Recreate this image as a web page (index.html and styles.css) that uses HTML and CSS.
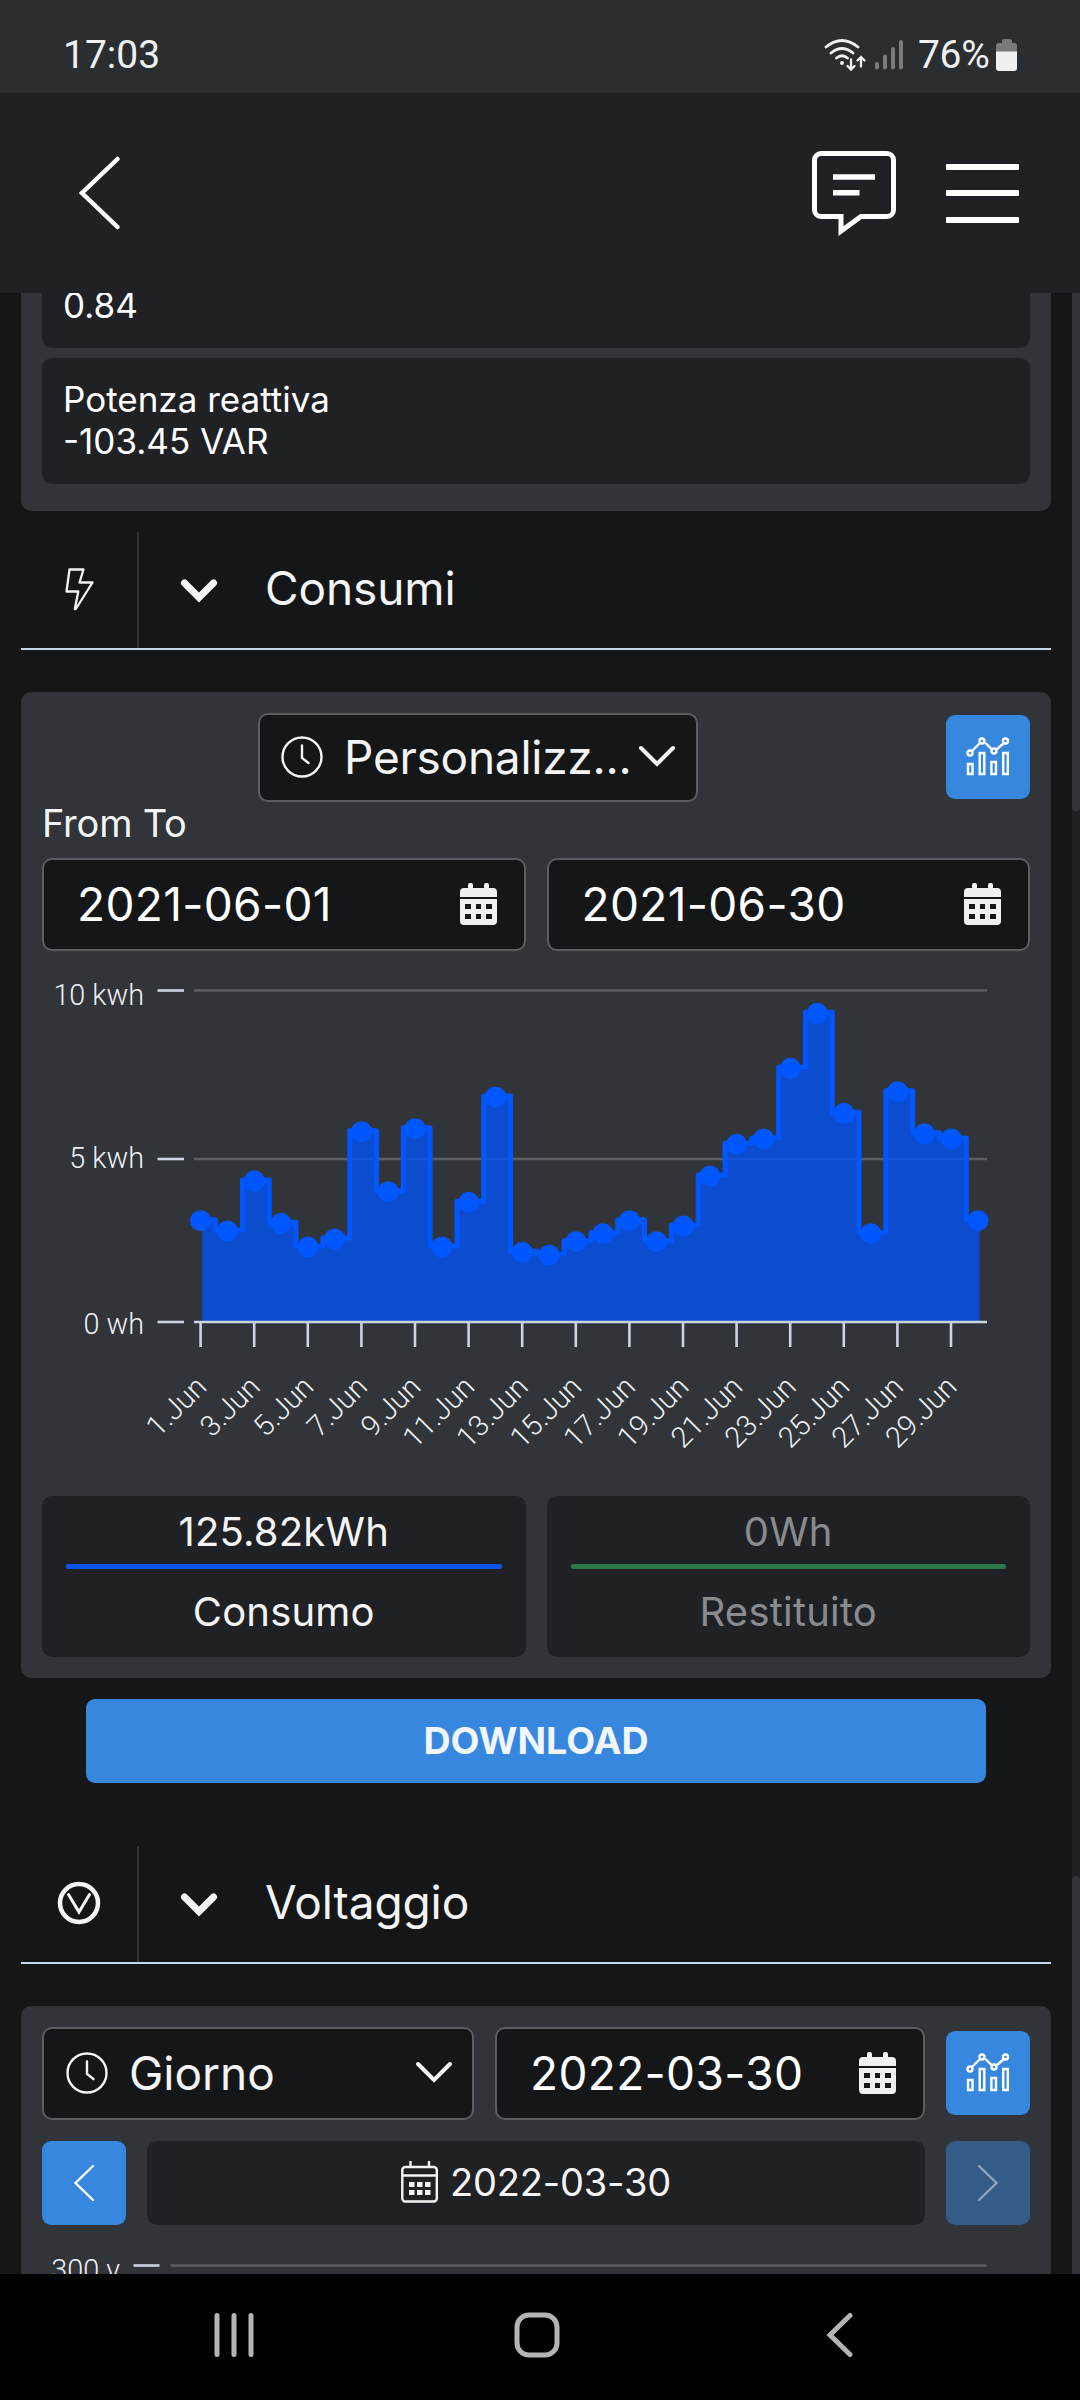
FILE: index.html
```html
<!DOCTYPE html>
<html lang="it">
<head>
  <meta charset="UTF-8" />
  <meta name="viewport" content="width=device-width, initial-scale=1.0" />
  <title>Consumi</title>
  <link rel="stylesheet" href="styles.css">
</head>
<body>

  <svg class="sprite" width="0" height="0">
    <symbol id="calendar" viewBox="0 0 38 42">
      <path fill-rule="evenodd" d="M0 14V9a4 4 0 0 1 4-4h4V2a2 2 0 0 1 2-2h1a2 2 0 0 1 2 2v3h11V2a2 2 0 0 1 2-2h1a2 2 0 0 1 2 2v3h4a4 4 0 0 1 4 4v5zM0 16h37v22a4 4 0 0 1-4 4H4a4 4 0 0 1-4-4zM5 21v5h6v-5zM16 21v5h5v-5zM26 21v5h6v-5zM5 31v5h6v-5zM16 31v5h5v-5zM26 31v5h6v-5z"/>
    </symbol>
    <symbol id="clock" viewBox="0 0 42 42">
      <circle cx="21" cy="21" r="19.5"/>
      <path d="M21 9.500v12.500l6.500 5"/>
    </symbol>
    <symbol id="stats" viewBox="0 0 44 40">
      <path d="M6 14l8-8M19.500 6l6 6M31 12l7-6"/>
      <circle cx="4" cy="16" r="2.500"/><circle cx="16" cy="4" r="2.500"/><circle cx="28" cy="14" r="2.500"/><circle cx="39.500" cy="4" r="2.500"/>
      <path d="M2 27h4.500v10H2zM13.700 16h4.600v21h-4.600zM25.400 25h4.600v12h-4.600zM37.200 16h4.600v21h-4.600z"/>
    </symbol>
    <symbol id="chevron" viewBox="0 0 38 24">
      <path d="M3 3l16 16L35 3"/>
    </symbol>
    <symbol id="chevron-bold" viewBox="0 0 38 24">
      <path d="M4.500 4L19 18.500 33.500 4"/>
    </symbol>
  </svg>

  <div class="status">
    <span class="time">17:03</span>
    <svg class="signal" width="82" height="36" viewBox="824 36 82 36" fill="none" stroke="#f0f0f0" stroke-width="2.800" stroke-linecap="round">
      <path d="M826 46q16-13 32 0M831 52q11-9 22 0M836.500 57q5.500-4.500 11 0"/>
      <circle cx="842" cy="62" r="2" fill="#f0f0f0" stroke="none"/>
      <path d="M851 58.500v9.500M847.500 65l3.500 3.500 3.500-3.500M861 65.500v-9.500M857.500 59.500l3.500-3.500 3.500 3.500" stroke-width="2.300"/>
      <path d="M877 63v3.500M885 55.500v11M893 48v18.500M901 41v25.500" stroke="#797c7e" stroke-width="4"/>
    </svg>
    <span class="percent">76%</span>
    <svg class="battery" width="22" height="34" viewBox="0 0 22 34">
      <path d="M6 5V3a2 2 0 0 1 2-2h6a2 2 0 0 1 2 2v2h2a3 3 0 0 1 3 3v6H0V8a3 3 0 0 1 3-3z" fill="#77797b"/>
      <path d="M0 13.500h21V30a3 3 0 0 1-3 3H3a3 3 0 0 1-3-3z" fill="#f0f0f0"/>
    </svg>
  </div>

  <header class="topbar">
    <svg class="back" width="44" height="76" viewBox="0 0 44 76" fill="none" stroke="#fff" stroke-width="4.500" stroke-linecap="round">
      <path d="M39.500 4L4 38l35.500 34"/>
    </svg>
    <svg class="chat" width="84" height="86" viewBox="0 0 84 86" fill="none" stroke="#fff" stroke-width="5">
      <path d="M9 3.500h66a6.500 6.500 0 0 1 6.500 6.500v50a6.500 6.500 0 0 1-6.500 6.500H49L29 81V66.500H9A6.500 6.500 0 0 1 2.500 60V10A6.500 6.500 0 0 1 9 3.500z"/>
      <path d="M21 27h42M21 42.800h26.500" stroke-width="5.500"/>
    </svg>
    <button class="menu-btn"><span></span><span></span><span></span></button>
  </header>

  <main class="content">
    <section class="card card-values">
      <div class="value value-cut">0.84</div>
      <div class="value">Potenza reattiva<br>-103.45 VAR</div>
    </section>

    <div class="section-head">
      <div class="section-icon">
        <svg width="30" height="46" viewBox="0 0 30 46" fill="none" stroke="#f4f4f4" stroke-width="2.300" stroke-linejoin="round">
          <path d="M5.500 3.500h14L15.500 16.500h13L11.800 43h-1l3.500-17.500H2.500z"/>
        </svg>
      </div>
      <svg class="toggle" width="38" height="24"><use href="#chevron-bold"/></svg>
      <h2>Consumi</h2>
    </div>

    <section class="card card-usage">
      <div class="toolbar">
        <div class="select select-period">
          <svg class="clock" width="42" height="42"><use href="#clock"/></svg>
          <span>Personalizz...</span>
          <svg class="arrow" width="38" height="24"><use href="#chevron"/></svg>
        </div>
        <button class="btn btn-stats"><svg width="44" height="40"><use href="#stats"/></svg></button>
      </div>
      <div class="range-label">From To</div>
      <div class="dates">
        <div class="date">2021-06-01<svg width="38" height="42"><use href="#calendar"/></svg></div>
        <div class="date">2021-06-30<svg width="38" height="42"><use href="#calendar"/></svg></div>
      </div>
      <svg id="chart" class="chart" width="988" height="539" viewBox="42 957 988 539"></svg>
      <div class="legend">
        <div class="legend-item">125.82kWh<hr>Consumo</div>
        <div class="legend-item returned">0Wh<hr>Restituito</div>
      </div>
    </section>

    <button class="btn download">DOWNLOAD</button>

    <div class="section-head">
      <div class="section-icon">
        <svg width="44" height="44" viewBox="0 0 44 44" fill="none" stroke="#f4f4f4" stroke-linecap="round">
          <circle cx="22" cy="22" r="19" stroke-width="4.500"/>
          <path d="M11.500 13.500L22 31l10.500-17.500" stroke-width="3"/>
        </svg>
      </div>
      <svg class="toggle" width="38" height="24"><use href="#chevron-bold"/></svg>
      <h2>Voltaggio</h2>
    </div>

    <section class="card card-voltage">
      <div class="toolbar">
        <div class="select select-day">
          <svg class="clock" width="42" height="42"><use href="#clock"/></svg>
          <span>Giorno</span>
          <svg class="arrow" width="38" height="24"><use href="#chevron"/></svg>
        </div>
        <div class="date">2022-03-30<svg width="38" height="42"><use href="#calendar"/></svg></div>
        <button class="btn btn-stats"><svg width="44" height="40"><use href="#stats"/></svg></button>
      </div>
      <div class="pager">
        <button class="btn"><svg width="22" height="40" viewBox="0 0 22 40"><path d="M20 3L2.500 20 20 37"/></svg></button>
        <div class="current-day">
          <svg width="38" height="42" viewBox="0 0 38 42" fill="none" stroke="#f4f4f4" stroke-width="2.400">
            <rect x="1.300" y="6" width="34.500" height="34.500" rx="3"/>
            <path d="M9.500 0v6M28 0v6M1 14.500h35"/>
            <path d="M8 23.500h21.500M8 31.500h21.500" stroke-width="5" stroke-dasharray="5.500 2.500"/>
          </svg>
          <span>2022-03-30</span>
        </div>
        <button class="btn" disabled><svg width="22" height="40" viewBox="0 0 22 40"><path d="M2 3l17.500 17L2 37"/></svg></button>
      </div>
      <svg class="chart" width="988" height="60" viewBox="42 2250 988 60">
        <text x="120" y="2280" text-anchor="end">300 v</text>
        <path d="M133.500 2265.500h26" class="axis"/>
        <path d="M170.500 2265.500h816" class="grid"/>
      </svg>
    </section>

    <div class="scrollbar"><i></i><i></i></div>
  </main>

  <nav class="navbar">
    <svg width="40" height="46" viewBox="0 0 40 46"><path d="M3 3.500v39M20 3.500v39M37 3.500v39"/></svg>
    <svg width="48" height="48" viewBox="0 0 48 48"><rect x="4" y="4" width="40" height="40" rx="12"/></svg>
    <svg width="28" height="46" viewBox="0 0 28 46"><path d="M24 3.500L4 23l20 19.500"/></svg>
  </nav>

  <script src="script.js"></script>
</body>
</html>
```
FILE: styles.css
```css
:root {
  --bg: #151618;
  --panel: #202124;
  --card: #313438;
  --blue: #3887df;
  --text: #f4f4f4;
}

* {
  box-sizing: border-box;
}

body {
  margin: 0;
  height: 2400px;
  display: flex;
  flex-direction: column;
  overflow: hidden;
  background: var(--bg);
  color: var(--text);
  font-family: Inter, "Liberation Sans", sans-serif;
}

svg {
  display: block;
  flex: none;
}

.sprite {
  position: absolute;
}

button {
  border: none;
  padding: 0;
  font-family: inherit;
}

/* status bar */
.status {
  height: 93px;
  flex: none;
  display: flex;
  align-items: center;
  padding: 17px 62px 0 63px;
  background: #2a2e30;
  font-family: Roboto, sans-serif;
  font-size: 39px;
  color: #f0f0f0;
}

.time {
  flex: 1;
}

.signal {
  margin-right: 12px;
}

.percent {
  width: 75px;
  margin-right: 3px;
  white-space: nowrap;
  letter-spacing: -0.3px;
}

/* header */
.topbar {
  height: 200px;
  flex: none;
  display: flex;
  align-items: center;
  padding: 0 61px 0 78px;
  background: var(--panel);
}

.chat {
  margin-left: auto;
  margin-right: 50px;
}

.menu-btn {
  width: 73px;
  display: flex;
  flex-direction: column;
  gap: 20.5px;
  background: none;
}

.menu-btn span {
  height: 6px;
  border-radius: 1px;
  background: #fff;
}

/* content */
.content {
  position: relative;
  height: 1981px;
  flex: none;
  padding: 0 29px 0 21px;
  overflow: hidden;
}

.card {
  padding: 21px;
  border-radius: 10px;
  background: var(--card);
}

.card-values {
  height: 218px;
  padding-top: 0;
  border-radius: 0 0 10px 10px;
}

.value {
  height: 126px;
  padding: 20px 21px;
  border-radius: 10px;
  background: var(--panel);
  color: #fff;
  font-size: 35px;
  line-height: 42px;
}

.value-cut {
  height: 55px;
  margin-bottom: 10px;
  padding-top: 0;
  line-height: 25px;
  border-radius: 0 0 10px 10px;
}

.section-head {
  height: 118px;
  margin-top: 21px;
  display: flex;
  align-items: center;
  border-bottom: 2px solid #c3d7e8;
}

.section-icon {
  width: 118px;
  height: 100%;
  display: flex;
  align-items: center;
  justify-content: center;
  border-right: 2px solid #313438;
}

.section-icon svg {
  margin-top: -3px;
}

.toggle {
  margin: 2px 0 0 41px;
  fill: none;
  stroke: var(--text);
  stroke-width: 7;
  stroke-linecap: round;
}

.section-head h2 {
  margin: -4px 0 0 47px;
  font-size: 46px;
  font-weight: 400;
  letter-spacing: -0.1px;
}

.card-usage {
  height: 986px;
  margin-top: 42px;
}

.toolbar {
  display: flex;
  align-items: center;
  gap: 21px;
}

.card-usage .toolbar {
  height: 89px;
}

.btn-stats {
  margin-top: -2px;
}

.select,
.date {
  flex: 1;
  height: 93px;
  display: flex;
  align-items: center;
  border: 2px solid #5b5d60;
  border-radius: 10px;
  background: var(--bg);
  font-size: 46px;
}

.select {
  padding: 0 19px 1px 22px;
}

.select .clock {
  margin-right: 21px;
}

.select-period {
  flex: none;
  width: 440px;
  height: 89px;
  margin: 0 auto 0 216px;
  padding: 0 20px 2px 21px;
  letter-spacing: -0.25px;
}

.select-day {
  flex: none;
  width: 432px;
}

.clock {
  fill: none;
  stroke: var(--text);
  stroke-width: 2.4;
  stroke-linecap: round;
}

.arrow {
  margin-left: auto;
  fill: none;
  stroke: var(--text);
  stroke-width: 4;
  stroke-linecap: round;
}

.date {
  justify-content: space-between;
  padding: 0 26px 2px 33px;
  color: #fff;
  letter-spacing: 0.35px;
}

.date svg {
  fill: #f0f0f0;
}

.btn {
  flex: none;
  width: 84px;
  height: 84px;
  display: flex;
  align-items: center;
  justify-content: center;
  border-radius: 9px;
  background: var(--blue);
  color: #f0f6fc;
}

.btn svg {
  fill: none;
  stroke: #fff;
  stroke-width: 2.4;
}

.btn:disabled {
  background: #345c88;
}

.btn:disabled svg {
  opacity: 0.45;
}

.range-label {
  height: 56px;
  line-height: 42px;
  font-size: 38px;
  letter-spacing: -0.2px;
}

.dates {
  display: flex;
  gap: 21px;
}

.chart {
  margin-top: 6px;
}

.chart text {
  font-family: Roboto, sans-serif;
  font-weight: 300;
  font-size: 28.8px;
  fill: #eef0f4;
}

.axis {
  stroke: #ccd3e2;
  stroke-width: 2.6;
}

.grid {
  stroke: #5c5e62;
  stroke-width: 2.6;
}

.area {
  fill: #0453f4;
  fill-opacity: 0.8;
}

.line {
  fill: none;
  stroke: #0057ff;
  stroke-width: 5;
  stroke-linejoin: round;
}

.dot {
  fill: #0057ff;
}

.legend {
  display: flex;
  gap: 21px;
}

.legend-item {
  flex: 1;
  height: 161px;
  padding: 12px 24px 0;
  border-radius: 10px;
  background: var(--panel);
  font-size: 40px;
  line-height: 48px;
  letter-spacing: 0.2px;
  text-align: center;
}

.legend-item hr {
  height: 5px;
  margin: 8px 0 19px;
  border: none;
  border-radius: 2px;
  background: #0b55ea;
}

.legend-item.returned {
  color: #8a8b8d;
}

.returned hr {
  background: #2c784b;
}

.download {
  width: 900px;
  margin: 21px 0 0 65px;
  padding-bottom: 2px;
  font-size: 37.5px;
  font-weight: 700;
}

.download + .section-head {
  margin-top: 63px;
}

.card-voltage {
  height: 320px;
  margin-top: 42px;
}

.pager {
  display: flex;
  gap: 21px;
  margin-top: 21px;
}

.pager .btn svg {
  stroke-linecap: round;
}

.current-day {
  flex: 1;
  display: flex;
  align-items: center;
  justify-content: center;
  gap: 11px;
  padding-bottom: 2px;
  border-radius: 10px;
  background: var(--panel);
  font-size: 38px;
  letter-spacing: -0.2px;
}

.card-voltage .chart {
  margin-top: 25px;
}

.scrollbar {
  position: absolute;
  top: 0;
  right: 0;
  width: 8px;
  height: 100%;
  display: flex;
  flex-direction: column;
  justify-content: space-between;
  background: var(--panel);
}

.scrollbar i {
  height: 518px;
  border-radius: 0 0 4px 4px;
  background: var(--card);
}

.scrollbar i:last-child {
  height: 398px;
  border-radius: 4px 4px 0 0;
}

/* android navigation */
.navbar {
  height: 126px;
  flex: none;
  display: flex;
  align-items: center;
  gap: 259px;
  padding: 0 0 5px 214px;
  background: #000;
}

.navbar svg {
  fill: none;
  stroke: #b4b4b4;
  stroke-width: 5;
  stroke-linecap: round;
}

.navbar svg:last-child {
  margin-left: 6px;
}
```
FILE: script.js
```js
const chart = document.getElementById("chart");

const START = 202.2;
const STEP = 26.81;
const BASE = 1322;

// top of each day, in chart units
const days = [
  1220.7, 1231, 1181, 1223.3, 1247, 1239, 1131.7, 1191.7, 1128.7, 1247,
  1202.3, 1097, 1252.3, 1255, 1241.7, 1233.7, 1220.7, 1241.7, 1226, 1176,
  1144.3, 1139, 1068.3, 1013.3, 1113.3, 1233.7, 1091.7, 1133.7, 1139, 1220.7
];

let html = "";

[["10 kwh", 990.5, 1004.5], ["5 kwh", 1159, 1167.5], ["0 wh", 1322, 1333.5]].forEach(([label, y, ty]) => {
  html += `<text x="144" y="${ty}" text-anchor="end">${label}</text>`;
  html += `<path class="axis" d="M157.500 ${y}h26.500"/>`;
  if (y < BASE) html += `<path class="grid" d="M194 ${y}h793"/>`;
});

let step = `M${START} ${days[0] - 1}`;
days.forEach((y, i) => {
  if (i < days.length - 1) {
    step += `H${START + STEP * (i + 0.5)}V${days[i + 1] - 1}`;
  }
});
const end = START + STEP * (days.length - 1);
step += `H${end}`;

html += `<path class="area" d="${step}V${BASE}H${START}z"/>`;
html += `<path class="line" d="${step}"/>`;
html += `<path class="axis" d="M194 ${BASE}h793"/>`;

days.forEach((y, i) => {
  const x = START + STEP * i;
  html += `<circle class="dot" cx="${x - 1.6}" cy="${y}" r="10.5"/>`;
  if (i % 2 === 0) {
    const tx = 200.6 + 53.6 * i / 2;
    html += `<path class="axis" d="M${tx} ${BASE}v25"/>`;
    html += `<text text-anchor="end" transform="translate(${tx + 7.5} 1388.500) rotate(-45)">${i + 1}.Jun</text>`;
  }
});

chart.innerHTML = html;
```
